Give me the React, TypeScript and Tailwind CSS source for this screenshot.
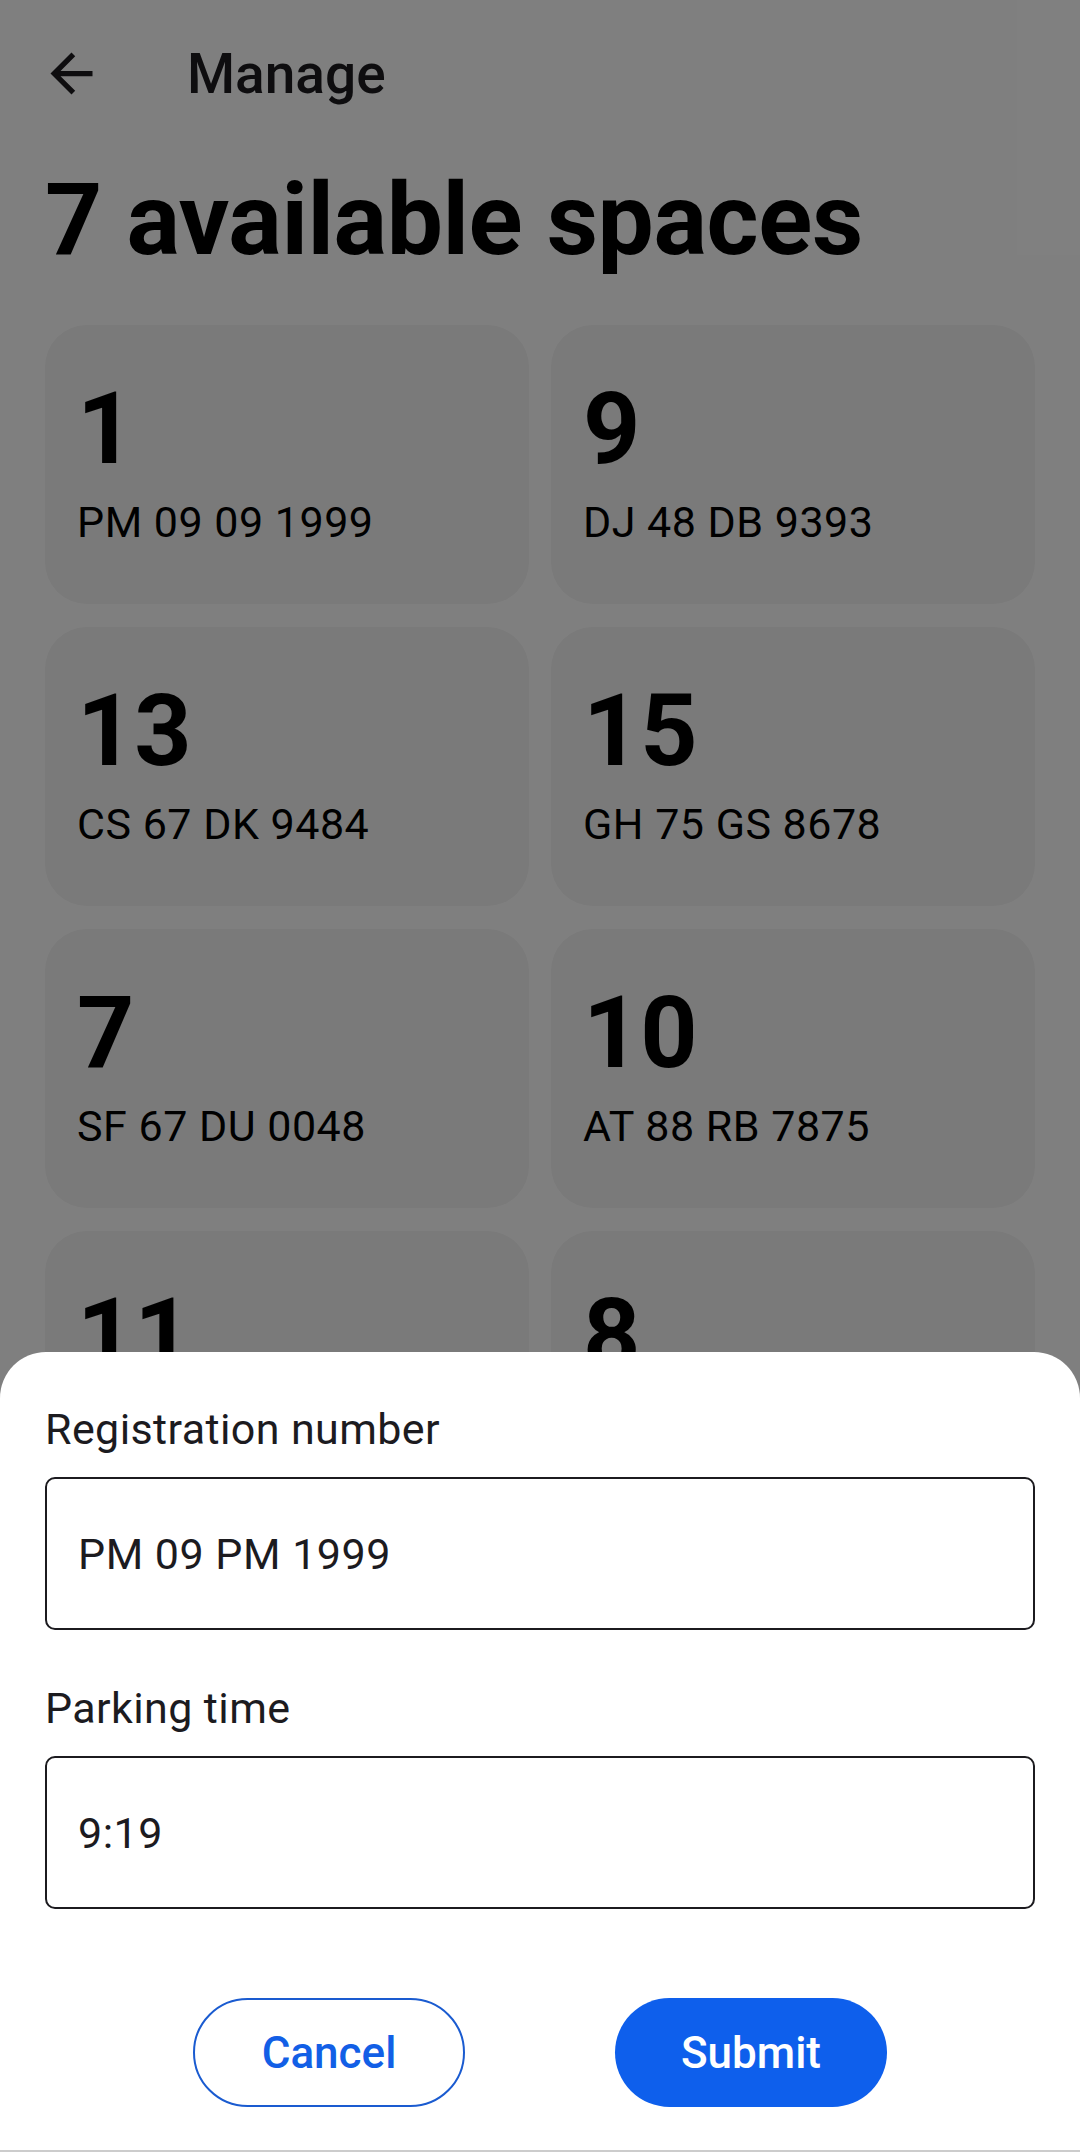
import React from "react";

const spaces = [
  { n: "1", plate: "PM 09 09 1999" },
  { n: "9", plate: "DJ 48 DB 9393" },
  { n: "13", plate: "CS 67 DK 9484" },
  { n: "15", plate: "GH 75 GS 8678" },
  { n: "7", plate: "SF 67 DU 0048" },
  { n: "10", plate: "AT 88 RB 7875" },
  { n: "11", plate: "KL 12 MN 3456" },
  { n: "8", plate: "OP 34 QR 7890" },
];

export default function App() {
  return (
    <div
      className="relative w-[1080px] h-[2152px] overflow-hidden bg-white text-[#1c1b1f]"
      style={{ fontFamily: "Roboto, 'Noto Sans', sans-serif" }}
    >
      {/* Page */}
      <div className="flex flex-col">
        <header className="h-[147px] flex items-center pl-[40px] gap-[84px]">
          <svg width="63" height="63" viewBox="0 0 24 24" fill="#1c1b1f">
            <path d="M20 11H7.83l5.59-5.59L12 4l-8 8 8 8 1.41-1.41L7.83 13H20v-2z" />
          </svg>
          <span className="text-[55px] leading-[56px] font-medium">Manage</span>
        </header>
        <h1 className="mt-[23px] px-[45px] text-[100px] leading-[100px] font-bold text-black tracking-[-0.4px]">
          7 available spaces
        </h1>
        <div className="mt-[55px] px-[45px] grid grid-cols-2 gap-x-[22px] gap-y-[23px]">
          {spaces.map((s) => (
            <div
              key={s.n}
              className="h-[279px] rounded-[42px] bg-[#f4f4f4] pl-[32px] pt-[54px] flex flex-col"
            >
              <span className="text-[100px] leading-[100px] font-bold text-black">{s.n}</span>
              <span className="mt-[22px] text-[43px] leading-[42px] tracking-[0.5px] text-black">{s.plate}</span>
            </div>
          ))}
        </div>
      </div>

      {/* Scrim */}
      <div className="absolute inset-0 bg-black/50" />

      {/* Bottom sheet */}
      <div className="absolute left-0 right-0 bottom-0 h-[800px] bg-white rounded-t-[46px] px-[45px] pt-[56px] flex flex-col">
        <label className="text-[43px] leading-[42px] tracking-[0.4px] text-[#1c1b1f]">Registration number</label>
        <div className="mt-[27px] h-[153px] rounded-[10px] border-[2px] border-[#1c1b1f] flex items-center pl-[31px] text-[43px] leading-[42px] tracking-[0.5px] text-[#1c1b1f]">
          PM 09 PM 1999
        </div>
        <label className="mt-[57px] text-[43px] leading-[42px] tracking-[0.4px] text-[#1c1b1f]">Parking time</label>
        <div className="mt-[27px] h-[153px] rounded-[10px] border-[2px] border-[#1c1b1f] flex items-center pl-[31px] text-[43px] leading-[42px] tracking-[0.5px] text-[#1c1b1f]">
          9:19
        </div>
        <div className="mt-[89px] flex justify-center gap-[150px]">
          <button className="w-[272px] h-[109px] rounded-full border-[2px] border-[#1a5bd0] text-[#125fe6] text-[44px] font-medium flex items-center justify-center">
            Cancel
          </button>
          <button className="w-[272px] h-[109px] rounded-full bg-[#0e5fec] text-white text-[44px] font-medium flex items-center justify-center">
            Submit
          </button>
        </div>
        <div className="absolute left-0 right-0 bottom-0 h-[2px] bg-[#cccccc]" />
      </div>
    </div>
  );
}
